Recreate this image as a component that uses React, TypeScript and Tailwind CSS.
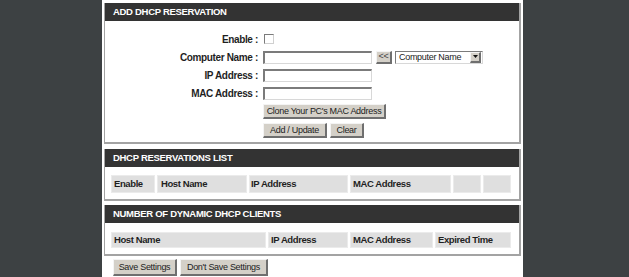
const label = "w-[153px] text-right text-[10px] font-bold tracking-[-0.35px] text-[#1f1f1f]";
const input = "h-[13px] w-[109px] border-t-2 border-l-2 border-b border-r border-t-[#7b7b7b] border-l-[#7b7b7b] border-b-[#d8d8d8] border-r-[#d8d8d8] bg-white";
const btn =
  "flex items-center justify-center bg-[#d4d0c8] border-t border-l border-t-[#f4f4f4] border-l-[#f4f4f4] border-r-2 border-b-2 border-r-[#6f6f6f] border-b-[#6f6f6f] text-[9px] tracking-[-0.3px] text-[#222] leading-none";
const cell = "flex items-center bg-[#dfdfdf] border border-[#ebebeb] pl-[2px] text-[9.5px] font-bold tracking-[-0.4px] text-[#1f1f1f]";

function Header({ title }: { title: string }) {
  return (
    <div className="flex h-[18px] items-center bg-[#333333] pl-[8px] text-[9.5px] font-bold tracking-[-0.3px] text-white">
      {title}
    </div>
  );
}

function Row({ name, children }: { name: string; children: React.ReactNode }) {
  return (
    <div className="flex h-[18px] items-center">
      <div className={label}>{name} :</div>
      <div className="ml-[5px] flex items-center">{children}</div>
    </div>
  );
}

export default function App() {
  return (
    <div className="flex h-screen w-full overflow-hidden bg-[#3d4143] font-['Liberation_Sans',Arial,sans-serif]">
      <div className="w-[102px] shrink-0" />
      <div className="w-[421px] shrink-0 bg-white px-[2px] pt-[3px]">
        {/* add reservation */}
        <div className="border-l border-r-2 border-b-2 border-[#a3a3a3]">
          <Header title="ADD DHCP RESERVATION" />
          <div className="pt-[9px] pb-[4px]">
            <Row name="Enable">
              <div className="ml-[1px] h-[10px] w-[10px] border border-t-[#7b7b7b] border-l-[#7b7b7b] border-b-[#d0d0d0] border-r-[#d0d0d0] bg-white" />
            </Row>
            <Row name="Computer Name">
              <div className={input} />
              <div className={btn + " ml-[4px] h-[13px] w-[16px] bg-[#c8c5bf] text-[8px] text-[#444]"}>&lt;&lt;</div>
              <div className="ml-[3px] flex h-[13px] w-[88px] items-center border-t border-l border-t-[#7b7b7b] border-l-[#7b7b7b] border-b border-r border-b-[#d8d8d8] border-r-[#d8d8d8] bg-white">
                <span className="flex-1 pl-[3px] text-[9px] leading-none tracking-[-0.3px] text-[#222]">Computer Name</span>
                <div className={btn + " h-[11px] w-[11px] mr-px"}>
                  <svg width="5" height="3" viewBox="0 0 5 3">
                    <path d="M0 0h5L2.5 3z" fill="#111" />
                  </svg>
                </div>
              </div>
            </Row>
            <Row name="IP Address">
              <div className={input} />
            </Row>
            <Row name="MAC Address">
              <div className={input} />
            </Row>
            <div className="ml-[158px] mt-[2px] flex">
              <div className={btn + " h-[15px] w-[123px]"}>Clone Your PC's MAC Address</div>
            </div>
            <div className="ml-[158px] mt-[4px] flex gap-[3px]">
              <div className={btn + " h-[15px] w-[64px]"}>Add / Update</div>
              <div className={btn + " h-[15px] w-[34px]"}>Clear</div>
            </div>
          </div>
        </div>

        {/* reservations list */}
        <div className="mt-[5px] border-l border-r-2 border-b-2 border-[#a3a3a3]">
          <Header title="DHCP RESERVATIONS LIST" />
          <div className="ml-[6px] mr-[8px] pt-[8px] pb-[6px]">
            <div className="grid h-[18px] grid-cols-[44px_90px_99px_101px_28px_28px] gap-[2px]">
              <div className={cell}>Enable</div>
              <div className={cell + " pl-[3px]"}>Host Name</div>
              <div className={cell + " pl-px"}>IP Address</div>
              <div className={cell}>MAC Address</div>
              <div className={cell} />
              <div className={cell} />
            </div>
          </div>
        </div>

        {/* dynamic clients */}
        <div className="mt-[4px] border-l border-r-2 border-b-2 border-[#a3a3a3]">
          <Header title="NUMBER OF DYNAMIC DHCP CLIENTS" />
          <div className="ml-[6px] mr-[8px] pt-[9px] pb-[6px]">
            <div className="grid h-[16px] grid-cols-[155px_80px_83px_76px] gap-[2px]">
              <div className={cell}>Host Name</div>
              <div className={cell}>IP Address</div>
              <div className={cell}>MAC Address</div>
              <div className={cell}>Expired Time</div>
            </div>
          </div>
        </div>

        <div className="ml-[9px] mt-[3px] flex gap-[3px]">
          <div className={btn + " h-[17px] w-[64px]"}>Save Settings</div>
          <div className={btn + " h-[17px] w-[88px]"}>Don't Save Settings</div>
        </div>
      </div>
      <div className="flex-1" />
    </div>
  );
}
